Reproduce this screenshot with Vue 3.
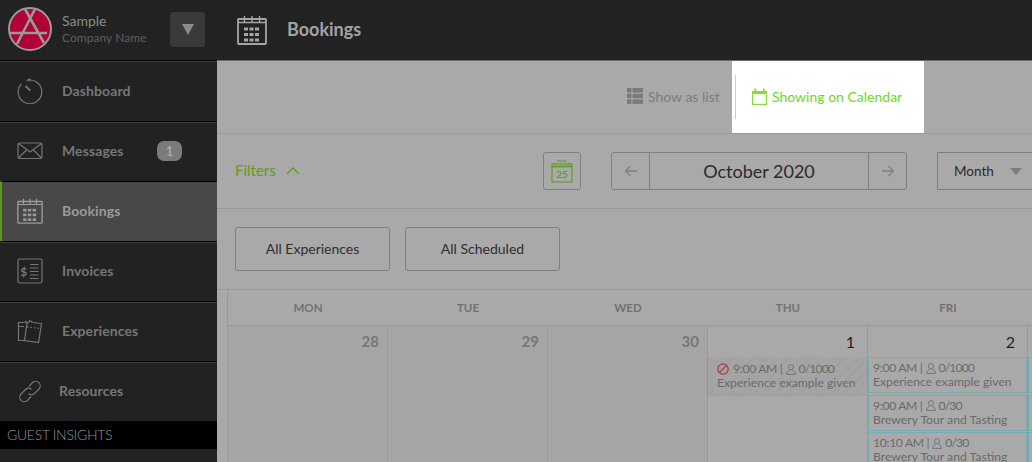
<script setup>
const nav = [
  { label: 'Dashboard', icon: 'dash', first: true },
  { label: 'Messages', icon: 'mail', badge: '1' },
  { label: 'Bookings', icon: 'cal', active: true },
  { label: 'Invoices', icon: 'inv' },
  { label: 'Experiences', icon: 'exp' },
  { label: 'Resources', icon: 'link', tight: true },
]
const days = ['MON', 'TUE', 'WED', 'THU', 'FRI', '']
const cells = [
  { n: '28', past: true, events: [] },
  { n: '29', past: true, events: [] },
  { n: '30', past: true, events: [] },
  { n: '1', events: [{ time: '9:00 AM', cap: '0/1000', name: 'Experience example given', blocked: true }] },
  { n: '2', events: [
    { time: '9:00 AM', cap: '0/1000', name: 'Experience example given' },
    { time: '9:00 AM', cap: '0/30', name: 'Brewery Tour and Tasting' },
    { time: '10:10 AM', cap: '0/30', name: 'Brewery Tour and Tasting' },
  ] },
  { n: '', events: [{}, {}, {}] },
]
const dots = []
for (const y of [12.5, 18, 23.5]) for (const x of [8, 13.5, 19]) dots.push({ x, y })
</script>

<template>
  <div class="app">
    <aside class="side">
      <div class="brand">
        <svg class="logo" width="46" height="46" viewBox="0 0 46 46">
          <circle cx="22" cy="22" r="21" fill="#b00035" stroke="#9a9a9a" stroke-width="2" />
          <path d="M17 2 L36 36 M27 2 L9 37 M1 26 H39" fill="none" stroke="#9a9a9a" stroke-width="2.6" />
        </svg>
        <div class="brand-text">
          <div class="brand-name">Sample</div>
          <div class="brand-sub">Company Name</div>
        </div>
        <div class="brand-btn"><span class="tri"></span></div>
      </div>
      <nav>
        <div v-for="item in nav" :key="item.label" class="nav-item" :class="{ active: item.active, tight: item.tight, first: item.first }">
          <svg class="nav-icon" width="26" height="26" viewBox="0 0 26 26" fill="none" stroke="currentColor" stroke-width="1.2">
            <template v-if="item.icon === 'dash'">
              <path d="M9.5 2.6 A11.8 11.8 0 1 1 4.2 6" />
              <path d="M10.5 1.5 L13 1.2 L13 3.6" />
              <path d="M8.6 8 L13.2 12.6" stroke-width="2" />
            </template>
            <template v-else-if="item.icon === 'mail'">
              <rect x="1" y="5" width="24" height="15.5" rx="1.5" />
              <path d="M1.5 5.5 L13 14 L24.5 5.5 M1.5 20 L9.5 12 M24.5 20 L16.5 12" />
            </template>
            <template v-else-if="item.icon === 'cal'">
              <g transform="scale(0.8667)">
                <rect x="1" y="4" width="28" height="25" rx="1" stroke-width="1.6" />
                <path d="M1 7.5 H29 M7.5 1 V7 M15 1 V7 M22.5 1 V7" stroke-width="1.4" />
                <rect v-for="d in dots" :key="d.x + '-' + d.y" :x="d.x - 1" :y="d.y" width="4" height="3" fill="currentColor" stroke="none" />
              </g>
            </template>
            <template v-else-if="item.icon === 'inv'">
              <rect x="1" y="1" width="24" height="24" rx="1.5" />
              <path d="M13 6.5 H21.5 M13 10 H21.5 M13 13.5 H21.5 M13 17 H21.5 M13 20.5 H21.5" />
              <text x="3.2" y="17.5" class="dollar">$</text>
            </template>
            <template v-else-if="item.icon === 'exp'">
              <path d="M7 4.5 H1.5 V22.5 H7 M1.5 8.5 H7" />
              <path d="M7.5 5 L8.5 3.5 L11 4.8 L13 2.5 L15.5 4.5 L24.5 5.5 L21.5 24.5 L7.5 22.5 L10 5" />
              <path d="M10 9 L23.5 10.5" stroke-dasharray="1.5 2" />
            </template>
            <template v-else>
              <path d="M12 8.5 L15.5 4.5 A4.6 4.6 0 0 1 22 11 L17.5 15.5 A4.6 4.6 0 0 1 11.5 15.5" />
              <path d="M14.5 11.5 A4.6 4.6 0 0 0 8.5 11.5 L4 16 A4.6 4.6 0 0 0 10.5 22.5 L14 18.5" />
            </template>
          </svg>
          <span class="nav-label">{{ item.label }}</span>
          <span v-if="item.badge" class="badge">{{ item.badge }}</span>
        </div>
      </nav>
      <div class="insights">GUEST INSIGHTS</div>
    </aside>

    <main class="main">
      <header class="top">
        <svg width="30" height="30" viewBox="0 0 30 30" fill="none" stroke="#a6a6a6">
          <rect x="1" y="4" width="28" height="25" rx="1" stroke-width="1.8" />
          <path d="M1 7.5 H29 M7.5 1 V7 M15 1 V7 M22.5 1 V7" stroke-width="1.4" />
          <rect v-for="d in dots" :key="d.x + '-' + d.y" :x="d.x - 1" :y="d.y" width="4" height="3" fill="#a6a6a6" stroke="none" />
        </svg>
        <span class="top-title">Bookings</span>
      </header>

      <section class="views">
        <div class="view-list">
          <svg width="16" height="16" viewBox="0 0 16 16" fill="#7a7a7a">
            <rect x="0" y="0" width="4.5" height="4.5" /><rect x="5.5" y="0" width="10.5" height="4.5" />
            <rect x="0" y="5.7" width="4.5" height="4.5" /><rect x="5.5" y="5.7" width="10.5" height="4.5" />
            <rect x="0" y="11.4" width="4.5" height="4.5" /><rect x="5.5" y="11.4" width="10.5" height="4.5" />
          </svg>
          <span>Show as list</span>
        </div>
        <div class="view-cal">
          <span class="view-sep"></span>
          <svg width="15" height="17" viewBox="0 0 15 17" fill="none" stroke="#86dc3c" stroke-width="1.2">
            <rect x="0.6" y="3.6" width="13.8" height="12.8" />
            <path d="M0.6 4.8 H14.4" stroke-width="2.4" />
            <path d="M3.2 0.5 V4 M11.8 0.5 V4" stroke-width="1.8" />
          </svg>
          <span>Showing on Calendar</span>
        </div>
      </section>

      <section class="filters">
        <div class="filter-toggle">
          <span>Filters</span>
          <svg width="14" height="9" viewBox="0 0 14 9" fill="none" stroke="#5f9c1f" stroke-width="1.3"><path d="M1 8 L7 2 L13 8" /></svg>
        </div>
        <button class="today">
          <svg width="22" height="23" viewBox="0 0 22 23" fill="none" stroke="#5f9c1f" stroke-width="1.1">
            <rect x="1" y="4" width="20" height="18" />
            <path d="M1 6.5 H21" stroke-width="1.6" />
            <path d="M6 1 H16 M3.5 2.5 V4 M18.5 2.5 V4" />
            <text x="11" y="18" class="today-num">25</text>
          </svg>
        </button>
        <div class="month-nav">
          <span class="arrow">
            <svg width="14" height="12" viewBox="0 0 14 12" fill="none" stroke="#7f7f7f" stroke-width="1.3"><path d="M13 6 H1.5 M6.5 1 L1.5 6 L6.5 11" /></svg>
          </span>
          <span class="month-label">October 2020</span>
          <span class="arrow">
            <svg width="14" height="12" viewBox="0 0 14 12" fill="none" stroke="#7f7f7f" stroke-width="1.3"><path d="M1 6 H12.5 M7.5 1 L12.5 6 L7.5 11" /></svg>
          </span>
        </div>
        <div class="month-select">
          <span>Month</span>
          <span class="select-tri"></span>
        </div>
      </section>

      <section class="chips">
        <button class="chip">All Experiences</button>
        <button class="chip">All Scheduled</button>
      </section>

      <section class="calendar">
        <div class="week">
          <div v-for="(d, i) in days" :key="i" class="dow">{{ d }}</div>
        </div>
        <div class="week cells">
          <div v-for="(c, ci) in cells" :key="ci" class="cell" :class="{ past: c.past }">
            <div class="num">{{ c.n }}</div>
            <div v-for="(e, i) in c.events" :key="i" class="event" :class="{ blocked: e.blocked }">
              <div v-if="e.time" class="ev-line">
                <svg v-if="e.blocked" class="ban" width="12" height="12" viewBox="0 0 12 12" fill="none" stroke="#b5304a" stroke-width="1.2">
                  <circle cx="6" cy="6" r="5.2" /><path d="M2.4 9.6 L9.6 2.4" />
                </svg>
                <span class="time">{{ e.time }} |</span>
                <svg class="user" width="10" height="11" viewBox="0 0 10 11" fill="none" stroke="#6f6f6f" stroke-width="0.9">
                  <circle cx="5" cy="3.2" r="2.6" /><path d="M0.6 10.4 C0.6 7.4 2.6 7 3.6 6.4 M9.4 10.4 C9.4 7.4 7.4 7 6.4 6.4 M0.6 10.4 H9.4" />
                </svg>
                <span class="cap">{{ e.cap }}</span>
              </div>
              <div v-if="e.name" class="ev-name">{{ e.name }}</div>
            </div>
          </div>
        </div>
      </section>
    </main>
  </div>
</template>

<style>
html, body { margin: 0; background: #a9a9a9; overflow: hidden; }
</style>

<style scoped>
.app {
  width: 1032px; height: 462px; display: flex; overflow: hidden;
  font-family: "Lato", "Open Sans", sans-serif; color: #333; background: #a9a9a9;
}
.side { width: 217px; flex: none; background: #222; display: flex; flex-direction: column; }
.brand { height: 60px; flex: none; display: flex; align-items: center; padding-left: 8px; box-sizing: border-box; }
.logo { flex: none; margin-top: -1px; }
.brand-text { margin-left: 8px; width: 108px; margin-top: -2px; }
.brand-name { font-size: 14px; color: #8c8c8c; line-height: 17px; }
.brand-sub { font-size: 12px; color: #5e5e5e; line-height: 17px; letter-spacing: 0.05px; }
.brand-btn { width: 35px; height: 35px; margin-top: -1px; background: #3a3a3a; border-radius: 3px; display: flex; align-items: center; justify-content: center; }
.tri { width: 0; height: 0; border-left: 6.5px solid transparent; border-right: 6.5px solid transparent; border-top: 11px solid #8c8c8c; }
.nav-item {
  height: 60px; box-sizing: border-box; display: flex; align-items: center; padding-left: 17px;
  border-top: 1px solid #000; box-shadow: inset 0 1px 0 #3c3c3c; color: #767676; position: relative;
}
.nav-item.first { height: 61px; }
.nav-item.active { background: #484848; border-left: 2px solid #5b9a1c; padding-left: 15px; color: #9a9a9a; box-shadow: none; }
.nav-icon { flex: none; margin-top: -1px; }
.nav-label { margin-left: 19px; margin-top: -2px; font-size: 14px; font-weight: 700; letter-spacing: 0.1px; }
.tight .nav-label { margin-left: 16px; }
.badge { position: absolute; left: 157px; top: 19px; width: 25px; height: 20px; background: #7b7b7b; color: #a9a9a9; border-radius: 7px; font-size: 13px; font-weight: 700; text-align: center; line-height: 20px; }
.insights { background: #000; height: 28px; flex: none; line-height: 28px; padding-left: 7px; font-size: 14px; font-weight: 300; letter-spacing: -0.3px; color: #959595; }
.main { flex: 1; min-width: 0; display: flex; flex-direction: column; }
.top { height: 61px; flex: none; box-sizing: border-box; background: #222; border-bottom: 1px solid #6a6a6a; display: flex; align-items: center; padding-left: 20px; }
.top-title { margin-left: 20px; font-size: 18px; font-weight: 700; color: #a2a2a2; margin-top: -2px; }
.views { height: 73px; flex: none; box-sizing: border-box; border-bottom: 1px solid #999; display: flex; padding-left: 410px; }
.view-list { display: flex; align-items: center; gap: 5px; width: 105px; flex: none; color: #7c7c7c; font-size: 14px; margin-top: -2px; }
.view-cal { width: 192px; flex: none; height: 72px; background: #fff; display: flex; align-items: center; color: #72d62a; font-size: 14px; padding-left: 3px; box-sizing: border-box; }
.view-cal > span:last-child { margin-top: -2px; }
.view-sep { width: 1px; height: 44px; background: #ccc; margin-right: 16px; }
.view-cal svg { margin-right: 5px; margin-top: -2px; }
.filters { height: 75px; flex: none; box-sizing: border-box; border-bottom: 1px solid #999; display: flex; align-items: center; padding-left: 18px; }
.filter-toggle { width: 308px; flex: none; display: flex; align-items: center; gap: 10px; color: #5f9c1f; font-size: 15px; margin-top: -2px; }
.today { width: 38px; height: 38px; flex: none; padding: 0; box-sizing: border-box; background: transparent; border: 1px solid #7f7f7f; border-radius: 3px; display: flex; align-items: center; justify-content: center; margin-right: 30px; }
.today-num { font: 700 10px "Lato", sans-serif; fill: #5f9c1f; stroke: none; text-anchor: middle; }
.month-nav { width: 296px; flex: none; height: 38px; box-sizing: border-box; border: 1px solid #7f7f7f; border-radius: 3px; display: flex; margin-right: 30px; }
.arrow { width: 38px; flex: none; display: flex; align-items: center; justify-content: center; box-sizing: border-box; }
.arrow:first-child { border-right: 1px solid #7f7f7f; }
.arrow:last-child { border-left: 1px solid #7f7f7f; }
.month-label { flex: 1; text-align: center; line-height: 36px; font-size: 18px; color: #2a2a2a; }
.month-select { width: 120px; flex: none; height: 38px; box-sizing: border-box; border: 1px solid #7f7f7f; display: flex; align-items: center; padding-left: 16px; font-size: 13.5px; color: #2a2a2a; gap: 16px; }
.select-tri { width: 0; height: 0; border-left: 6px solid transparent; border-right: 6px solid transparent; border-top: 7px solid #7f7f7f; }
.chips { height: 81px; flex: none; box-sizing: border-box; border-bottom: 1px solid #999; display: flex; align-items: center; gap: 15px; padding-left: 18px; }
.chip { width: 155px; height: 44px; background: transparent; border: 1px solid #7f7f7f; border-radius: 3px; font-family: inherit; font-size: 14px; color: #2f2f2f; padding: 0 0 2px; }
.calendar { margin-left: 10px; border-left: 1px solid #999; flex: 1; overflow: hidden; }
.week { display: grid; grid-template-columns: repeat(6, 160px); }
.dow { height: 35px; line-height: 35px; text-align: center; font-size: 11.5px; font-weight: 700; color: #727272; border-bottom: 1px solid #999; }
.cell { min-height: 140px; border-right: 1px solid #999; box-sizing: border-box; }
.past { background: #a5a5a5; }
.num { height: 31px; line-height: 31px; text-align: right; padding-right: 12px; font-size: 16px; color: #222; }
.past .num { color: #777; font-weight: 700; padding-right: 8px; font-size: 15px; }
.event { height: 36px; box-sizing: border-box; border: 1px solid #78acb3; margin-bottom: 1.5px; padding: 3px 4px; color: #6a6a6a; font-size: 12.2px; line-height: 14px; }
.event.blocked { border: 0; padding: 5px 9px; height: 37px; background: repeating-linear-gradient(135deg, #a2a2a2 0 4px, #a5a5a5 4px 8px); box-shadow: 0 1px 2px rgba(0,0,0,.1); }
.ev-line { display: flex; align-items: center; gap: 3px; }
.ev-name { white-space: nowrap; }
.time { letter-spacing: -0.35px; }
.cap { letter-spacing: -0.9px; }
.ban { margin-right: 1px; }
.dollar { font: 700 12px "Lato", sans-serif; fill: currentColor; stroke: none; }
</style>
